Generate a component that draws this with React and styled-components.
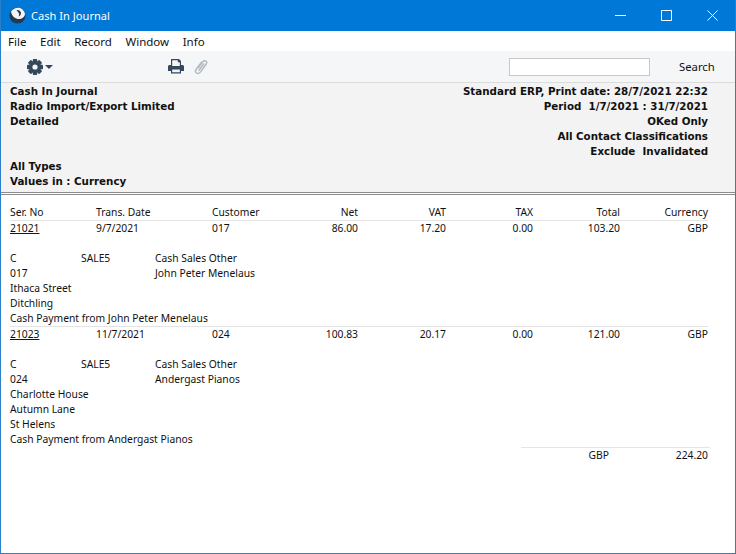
import React from "react";
import styled, { createGlobalStyle } from "styled-components";

const Global = createGlobalStyle`
  html, body {
    margin: 0;
    padding: 0;
    background: #fff;
  }
  body {
    font-family: "Noto Sans", "DejaVu Sans", sans-serif;
    font-size: 10.3px;
    color: #111;
  }
`;

const Win = styled.div`
  width: 736px;
  height: 554px;
  box-sizing: border-box;
  border: 1px solid #2b7fc9;
  border-top: 0;
  display: flex;
  flex-direction: column;
  overflow: hidden;
  background: #fff;
`;

const TitleBar = styled.div`
  height: 31px;
  background: #0078d7;
  color: #fff;
  display: flex;
  align-items: center;
  padding-left: 8px;
  font-size: 11.1px;
`;

const TitleText = styled.div`
  margin-left: 5px;
  flex: 1;
`;

const WinBtn = styled.div`
  width: 46px;
  height: 31px;
  display: flex;
  align-items: center;
  justify-content: center;
`;

const MenuBar = styled.div`
  height: 20px;
  display: flex;
  align-items: center;
  gap: 13.6px;
  padding-left: 7px;
  font-size: 11.5px;
  color: #111;
`;

const Toolbar = styled.div`
  height: 32px;
  background: #f5f6f7;
  border-bottom: 1px solid #dcdcdc;
  box-sizing: border-box;
  display: flex;
  align-items: center;
  padding-left: 26px;
`;

const ToolIcon = styled.div`
  display: flex;
  align-items: center;
  margin-left: ${p => p.$gap || 0}px;
`;

const SearchInput = styled.div`
  width: 139px;
  height: 16px;
  background: #fff;
  border: 1px solid #c8c8c8;
  margin-left: auto;
`;

const SearchLabel = styled.div`
  width: 85px;
  box-sizing: border-box;
  padding-left: 29px;
  font-size: 11.3px;
`;

const Header = styled.div`
  height: 110px;
  background: #f3f3f3;
  border-bottom: 1px solid #8c8c8c;
  box-sizing: border-box;
  padding: 1px 27px 0 9px;
  display: flex;
  justify-content: space-between;
  font-family: "DejaVu Sans", sans-serif;
  font-weight: 700;
  line-height: 15px;
  font-size: 10.3px;
`;

const HeaderCol = styled.div`
  text-align: ${p => p.$right ? "right" : "left"};
  white-space: pre;
`;

const Spacer = styled.div`
  height: 30px;
`;

const Rule = styled.div`
  height: 1px;
  margin-top: 1px;
  background: #8c8c8c;
`;

const Report = styled.div`
  padding: 10px 27px 0 9px;
  line-height: 15px;
  white-space: pre;
`;

const Row = styled.div`
  display: grid;
  grid-template-columns: 86px 116px 90px 56px 88px 87px 87px 88px;
  height: 15px;
  border-top: ${p => p.$line ? "1px solid #e4e4e4" : "0"};
`;

const Cell = styled.div`
  text-align: ${p => p.$right ? "right" : "left"};
`;

const SerLink = styled.span`
  color: #111;
  text-decoration: underline;
  text-decoration-color: #0000cc;
`;

const Detail = styled.div`
  display: grid;
  grid-template-columns: 71px 74px 1fr;
  height: 15px;
`;

const Gap = styled.div`
  height: ${p => p.$h}px;
`;

const TotalRow = styled.div`
  margin-left: 511px;
  margin-right: -2px;
  border-top: 1px solid #e8e4df;
  display: grid;
  grid-template-columns: 88px 99px;
  height: 15px;
`;

const Gear = () => (
  <svg width="27" height="16" viewBox="0 0 27 16">
    <g fill="#34495e">
      {[0, 45, 90, 135].map(a => (
        <rect key={a} x="5.800" y="0" width="4.400" height="16" rx="0.800" transform={`rotate(${a} 8 8)`} />
      ))}
    </g>
    <circle cx="8" cy="8" r="4.600" fill="none" stroke="#34495e" strokeWidth="2.600" />
    <circle cx="8" cy="8" r="2.600" fill="#f5f6f7" />
    <path fill="#34495e" d="M18 6h8l-4 4z" />
  </svg>
);

const Printer = () => (
  <svg width="16" height="15" viewBox="0 0 16 15">
    <path
      fill="#34495e"
      fillRule="evenodd"
      d="M3 0h8l2 2v4h1.500c.8 0 1.500.7 1.500 1.500V12h-3v2.500H3V12H0V7.500C0 6.700.7 6 1.500 6H3zM4.200 1.200V7h7.600V3.200h-2v-2zM4.200 10.500v2.800h7.600v-2.800z"
    />
  </svg>
);

const Clip = () => (
  <svg width="14" height="16" viewBox="0 0 14 16">
    <path
      fill="none"
      stroke="#b4bac1"
      strokeWidth="1.500"
      strokeLinecap="round"
      d="M5 11.300 9.700 5M4.500 8.500 8.700 2.700c.9-1.200 2.300-1.300 3.200-.6s1.100 2 .2 3.200L6.600 12.900c-1.300 1.700-3 1.900-4.100 1.100S1.100 11.700 2.300 10L7.500 3.200"
    />
  </svg>
);

const Logo = () => (
  <svg width="17" height="17" viewBox="0 0 17 17">
    <circle cx="8.500" cy="8.500" r="8" fill="#24384f" />
    <path fill="#f2f5f8" d="M2 4.500C4 1 8.500 0 11 1c3 1 5 4 5 6.500-.5 2.500-3 4.500-6 4.500-3.500 0-7-2-8-7.500z" />
    <path fill="#24384f" d="M7.500 3c2.500-.5 4.500 1 4.500 3s-1 3-2.500 3.500c1-1.500.8-3.500-.5-4.500C8.500 4.500 8 3.700 7.500 3z" />
  </svg>
);

const rows = [
  {
    no: "21021", date: "9/7/2021", cust: "017", net: "86.00", vat: "17.20", tax: "0.00", total: "103.20",
    name: "John Peter Menelaus",
    addr: ["Ithaca Street", "Ditchling"],
  },
  {
    no: "21023", date: "11/7/2021", cust: "024", net: "100.83", vat: "20.17", tax: "0.00", total: "121.00",
    name: "Andergast Pianos",
    addr: ["Charlotte House", "Autumn Lane", "St Helens"],
  },
];

const App = () => (
  <Win>
    <Global />
    <TitleBar>
      <Logo />
      <TitleText>Cash In Journal</TitleText>
      <WinBtn>
        <svg width="11" height="11" viewBox="0 0 11 11"><path stroke="#fff" d="M0 5.500h11" /></svg>
      </WinBtn>
      <WinBtn>
        <svg width="11" height="11" viewBox="0 0 11 11"><path fill="none" stroke="#fff" d="M.5.500h10v10H.5z" /></svg>
      </WinBtn>
      <WinBtn>
        <svg width="11" height="11" viewBox="0 0 11 11"><path stroke="#fff" d="M.5.500l10 10M10.500.500l-10 10" /></svg>
      </WinBtn>
    </TitleBar>
    <MenuBar>
      <span>File</span>
      <span>Edit</span>
      <span>Record</span>
      <span>Window</span>
      <span>Info</span>
    </MenuBar>
    <Toolbar>
      <ToolIcon><Gear /></ToolIcon>
      <ToolIcon $gap={114}><Printer /></ToolIcon>
      <ToolIcon $gap={10}><Clip /></ToolIcon>
      <SearchInput />
      <SearchLabel>Search</SearchLabel>
    </Toolbar>
    <Header>
      <HeaderCol>
        <div>Cash In Journal</div>
        <div>Radio Import/Export Limited</div>
        <div>Detailed</div>
        <Spacer />
        <div>All Types</div>
        <div>Values in : Currency</div>
      </HeaderCol>
      <HeaderCol $right>
        <div>Standard ERP, Print date: 28/7/2021 22:32</div>
        <div>Period  1/7/2021 : 31/7/2021</div>
        <div>OKed Only</div>
        <div>All Contact Classifications</div>
        <div>Exclude  Invalidated</div>
      </HeaderCol>
    </Header>
    <Rule />
    <Report>
      <Row>
        <Cell>Ser. No</Cell>
        <Cell>Trans. Date</Cell>
        <Cell>Customer</Cell>
        <Cell $right>Net</Cell>
        <Cell $right>VAT</Cell>
        <Cell $right>TAX</Cell>
        <Cell $right>Total</Cell>
        <Cell $right>Currency</Cell>
      </Row>
      {rows.map(r => (
        <div key={r.no}>
          <Row $line>
            <Cell><SerLink>{r.no}</SerLink></Cell>
            <Cell>{r.date}</Cell>
            <Cell>{r.cust}</Cell>
            <Cell $right>{r.net}</Cell>
            <Cell $right>{r.vat}</Cell>
            <Cell $right>{r.tax}</Cell>
            <Cell $right>{r.total}</Cell>
            <Cell $right>GBP</Cell>
          </Row>
          <Gap $h={15} />
          <Detail><div>C</div><div>SALE5</div><div>Cash Sales Other</div></Detail>
          <Detail><div>{r.cust}</div><div /><div>{r.name}</div></Detail>
          {r.addr.map(a => <div key={a}>{a}</div>)}
          <div>Cash Payment from {r.name}</div>
        </div>
      ))}
      <TotalRow>
        <Cell $right>GBP</Cell>
        <Cell $right>224.20</Cell>
      </TotalRow>
    </Report>
  </Win>
);

export default App;
